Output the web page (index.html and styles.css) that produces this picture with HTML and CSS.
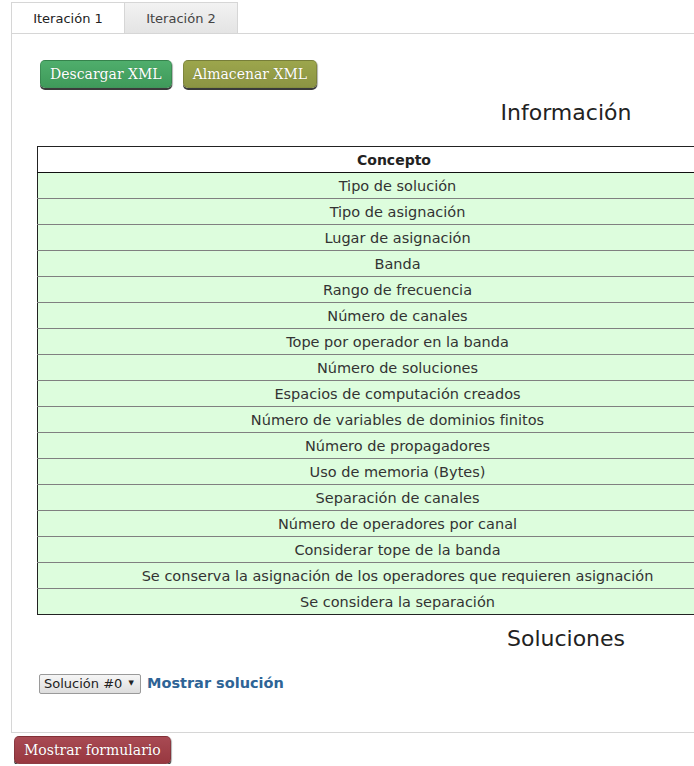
FILE: index.html
```html
<!DOCTYPE html>
<html lang="es">
<head>
<meta charset="utf-8">
<title>Iteraciones</title>
<link rel="stylesheet" href="styles.css">
</head>
<body>
<div class="page">
  <div class="tabs">
    <div class="tab active">Iteración 1</div>
    <div class="tab">Iteración 2</div>
  </div>
  <div class="panel">
    <div class="actions">
      <button class="btn btn-green">Descargar XML</button>
      <button class="btn btn-olive">Almacenar XML</button>
    </div>
    <div class="content">
      <h2 class="heading">Información</h2>
      <table class="info">
        <thead>
          <tr><th class="c1">Concepto</th><th class="c2"></th></tr>
        </thead>
        <tbody>
          <tr><td>Tipo de solución</td><td></td></tr>
          <tr><td>Tipo de asignación</td><td></td></tr>
          <tr><td>Lugar de asignación</td><td></td></tr>
          <tr><td>Banda</td><td></td></tr>
          <tr><td>Rango de frecuencia</td><td></td></tr>
          <tr><td>Número de canales</td><td></td></tr>
          <tr><td>Tope por operador en la banda</td><td></td></tr>
          <tr><td>Número de soluciones</td><td></td></tr>
          <tr><td>Espacios de computación creados</td><td></td></tr>
          <tr><td>Número de variables de dominios finitos</td><td></td></tr>
          <tr><td>Número de propagadores</td><td></td></tr>
          <tr><td>Uso de memoria (Bytes)</td><td></td></tr>
          <tr><td>Separación de canales</td><td></td></tr>
          <tr><td>Número de operadores por canal</td><td></td></tr>
          <tr><td>Considerar tope de la banda</td><td></td></tr>
          <tr><td>Se conserva la asignación de los operadores que requieren asignación</td><td></td></tr>
          <tr><td>Se considera la separación</td><td></td></tr>
        </tbody>
      </table>
      <h2 class="heading heading-sol">Soluciones</h2>
    </div>
    <div class="sol-row">
      <span class="select-wrap">
        <select class="select"><option>Solución #0</option></select>
      </span>
      <a class="link" href="#">Mostrar solución</a>
    </div>
  </div>
  <button class="btn btn-red">Mostrar formulario</button>
</div>
</body>
</html>
```
FILE: styles.css
```css
html, body {
  margin: 0;
  padding: 0;
  overflow: hidden;
  background: #ffffff;
}
body {
  font-family: "DejaVu Sans", "Liberation Sans", sans-serif;
  color: #333333;
}
.page {
  padding-left: 11px;
  width: 1200px;
}
.tabs {
  display: flex;
  padding-top: 2px;
}
.tab {
  width: 112px;
  height: 30px;
  border: 1px solid #d6d6d6;
  border-bottom: none;
  display: flex;
  align-items: center;
  justify-content: center;
  font-size: 13px;
  color: #444444;
  background: linear-gradient(#f2f2f2, #e4e4e4);
}
.tab + .tab {
  border-left: none;
}
.tab.active {
  background: #ffffff;
  color: #222222;
}
.panel {
  border: 1px solid #d6d6d6;
  border-right: none;
  padding: 26px 0 0 25px;
  height: 700px;
  box-sizing: border-box;
}
.actions {
  display: flex;
  gap: 11px;
  padding-left: 3px;
}
.btn {
  font-family: "DejaVu Serif", "Liberation Serif", serif;
  font-size: 14px;
  color: #ffffff;
  border: 1px solid rgba(0,0,0,0.15);
  border-radius: 5px;
  height: 28px;
  padding: 0 9px 1px;
  box-shadow: 0 2px 0 #3a3a3a, 1px 1px 1px rgba(0,0,0,0.3);
  text-shadow: 0 0 1px rgba(0,0,0,0.25);
  cursor: pointer;
}
.btn-green {
  background: linear-gradient(#4fae6c, #3f9a5a);
}
.btn-olive {
  background: linear-gradient(#9ca64c, #8c9443);
}
.btn-red {
  margin: 3px 0 0 3px;
  background: linear-gradient(#a84a53, #983840);
}
.content {
  width: 1058px;
}
.heading {
  margin: 12px 0 0;
  font-weight: normal;
  font-size: 22px;
  line-height: 26px;
  text-align: center;
  color: #222222;
}
.info {
  margin-top: 20px;
  width: 1058px;
  border-collapse: collapse;
  border: 1px solid #222222;
  font-size: 14.5px;
}
.info th {
  height: 25px;
  padding: 0;
  font-weight: bold;
  font-size: 14px;
  color: #222222;
  border-bottom: 1px solid #111111;
  background: #ffffff;
}
.info th.c1 { width: 712px; }
.info td {
  height: 25px;
  padding: 0 0 0 7px;
  text-align: center;
  background: #ddfddd;
  border-top: 1px solid #808080;
  color: #333333;
}
.info tbody tr:first-child td {
  border-top: none;
}
.heading-sol {
  margin-top: 11px;
}
.sol-row {
  display: flex;
  align-items: center;
  gap: 6px;
  margin-top: 21px;
  padding-left: 2px;
}
.select-wrap {
  position: relative;
  display: inline-block;
}
.select {
  appearance: none;
  -webkit-appearance: none;
  font-family: "DejaVu Sans", sans-serif;
  font-size: 13px;
  color: #222222;
  height: 20px;
  width: 102px;
  padding: 0 0 0 4px;
  border: 1px solid #9a9a9a;
  border-radius: 2px;
  background: linear-gradient(#f6f6f6, #dddddd);
}
.select-wrap::after {
  content: "▼";
  position: absolute;
  right: 7px;
  top: 6px;
  font-size: 7px;
  color: #222222;
  pointer-events: none;
}
.link {
  font-size: 14.5px;
  font-weight: bold;
  color: #2e6496;
  text-decoration: none;
}
```
